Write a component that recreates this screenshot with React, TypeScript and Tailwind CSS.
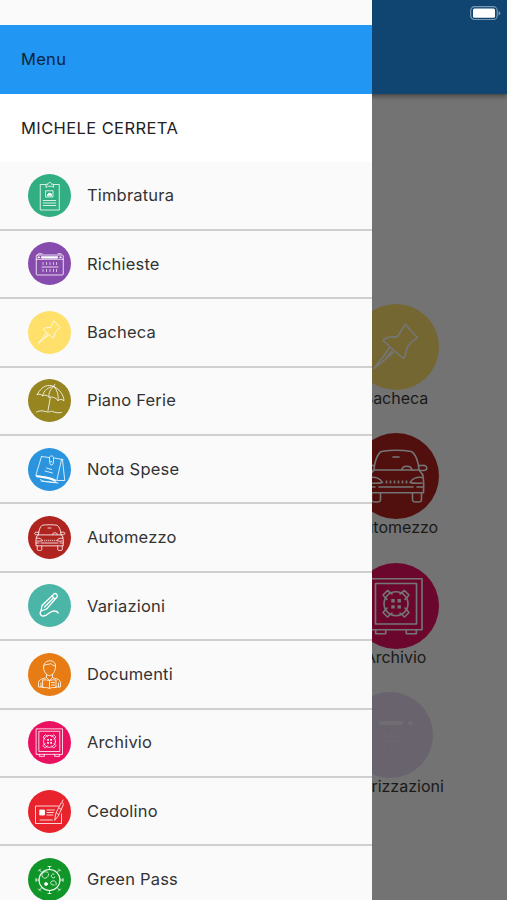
import React from 'react';
import { clsx } from 'clsx';

type IconName =
  | 'timbratura'
  | 'richieste'
  | 'bacheca'
  | 'ferie'
  | 'spese'
  | 'automezzo'
  | 'variazioni'
  | 'documenti'
  | 'archivio'
  | 'cedolino'
  | 'greenpass'
  | 'autorizzazioni';

interface MenuEntry {
  label: string;
  icon: IconName;
  color: string;
}

const entries: MenuEntry[] = [
  { label: 'Timbratura', icon: 'timbratura', color: 'bg-[#31ae82]' },
  { label: 'Richieste', icon: 'richieste', color: 'bg-[#874bad]' },
  { label: 'Bacheca', icon: 'bacheca', color: 'bg-[#fee06b]' },
  { label: 'Piano Ferie', icon: 'ferie', color: 'bg-[#97851f]' },
  { label: 'Nota Spese', icon: 'spese', color: 'bg-[#2b94de]' },
  { label: 'Automezzo', icon: 'automezzo', color: 'bg-[#b02420]' },
  { label: 'Variazioni', icon: 'variazioni', color: 'bg-[#4bb5a7]' },
  { label: 'Documenti', icon: 'documenti', color: 'bg-[#e77c15]' },
  { label: 'Archivio', icon: 'archivio', color: 'bg-[#ea1160]' },
  { label: 'Cedolino', icon: 'cedolino', color: 'bg-[#e9232b]' },
  { label: 'Green Pass', icon: 'greenpass', color: 'bg-[#109528]' },
];

// All drawings share an 86x86 box, the size of the circle on the home page
const drawings: Record<IconName, React.ReactNode> = {
  timbratura: (
    <>
      <path d="M35 21H24.5v51h38V21H52" />
      <path d="M36 26.5v-6h4c0-5 7-5 7 0h4v6l-4-2h-7z" />
      <rect x="36" y="33.5" width="14" height="12.5" />
      <path d="M39 43v-2l3-3 5 2v3z" fill="currentColor" />
      <path d="M30.5 53h25M30.5 58h25M30.5 63h25" />
    </>
  ),
  richieste: (
    <>
      <rect x="16.5" y="26" width="54" height="40" rx="2" />
      <path d="M16.5 34.5h54M21 23.5h7M60 23.5h6" />
      <path d="M28 30.5h30" strokeWidth="4.5" />
      <path d="M20.5 30.5h2M64 30.5h2" strokeWidth="3" />
      <path d="M28 50h32" />
      <path
        d="M30 41v4M37 41v4M44 41v4M51 41v4M57 41v4M30 55v4M37 55v4M44 55v4M51 55v4M57 55v4"
        opacity="0.85"
      />
    </>
  ),
  autorizzazioni: (
    <>
      <path d="M34 31h20" strokeWidth="4" />
      <path d="M63 31h.5" strokeWidth="4" />
      <path d="M37 49h20M38 41v3M44 41v3M50 41v3M56 41v3M38 55v3M44 55v3M50 55v3M56 55v3" opacity="0.35" />
    </>
  ),
  bacheca: (
    <>
      <path d="M52.3 20.3c1.3 2 2.5 2.8 5 5.4 3 3.2 4.5 5.6 7.2 7.5-1.2 2-3.6 2.2-6 5.1-3 3.4-4.5 4.2-4.8 6.4-.5 3.3-.8 7.3-3.4 9.8L30 36.5c2.4-3 8.5-4 14.3-3.5z" />
      <path d="M36.5 43.5 30 53l-9.3 11.5L31 56.5l9.5-8M33 54l6-7" />
    </>
  ),
  ferie: (
    <>
      <path d="M18.5 31C27 13 42 10 51.5 15c12 6 20 17 20.5 28.5-4-3-8-3.5-12-.5-5-6-11-8-18-6.5-3-4-9-5.5-13-3-3-3-6-3.7-10.500-2.5z" />
      <path d="M51.5 15C39 16 32 23 29 33.5M51.5 15C44 21 41 28 42 36.5M51.5 15c7 7 10 17 8.500 28M51.5 15l2-4" />
      <path d="m44.5 38-4.5 25M17 66c7-3 11-3 18-1 9 3 10-2 15 0 5 3 10 3 17 2" />
    </>
  ),
  spese: (
    <>
      <path d="m27 17 15 2m10 1 18 3M27 17 15.5 55c12 3 25 1 42 10L67 23" />
      <path d="M59 65h14.5L69 24M25 63c3 5 17 5 32 6M26 66l34 4" />
      <path d="M43 27v-8c1-5 8-4 8 1 0 4 1 12-3 14-4 1-5-3-4-6 1-2 3-2 4 0" />
      <path d="m37 40 10 3M34 46l15 4" />
      <path d="M18 56.5c14 2 24 2 36 9" strokeWidth="4" />
    </>
  ),
  automezzo: (
    <>
      <path d="M21 37c0-6 3-16 7.3-18.5 8-1.300 22-1.300 30 0C63 21 66 31 66 37zM21 37l-4 5M66 37l4 5" />
      <path d="M21.5 32.5h-4c-5-1-6 5-1 5h4M65.5 32.5h4c5-1 6 5 1 5h-4" />
      <path d="M40 24h6M49 37c0-5 9-5 10 0" />
      <path d="M17 42c-2 6-1 12-1 17.700h54.500c0-6 1-12-1-17.700" />
      <path d="M17.5 44.5c5-1 10 1 12 5-4 1-8 1-12 .5M69 44.5c-5-1-10 1-12 5 4 1 8 1 12 .5" />
      <path
        d="M33.5 47.500v3M37.5 47.500v3M41.5 47.500v3M45.5 47.500v3M49.5 47.500v3M53.5 47.500v3"
        strokeLinecap="butt"
      />
      <path d="M26 54h34M16 54h6M64 54h6" />
      <path d="M18.5 60v6c0 3 1 3 4.500 3s4.500 0 4.500-3v-6M59.500 60v6c0 3 1 3 4.500 3s4.500 0 4.500-3v-6" />
    </>
  ),
  variazioni: (
    <>
      <path d="m28 43 24-23c3-3 9 2 6 6L37 50l-11 4z" strokeWidth="2.6" />
      <path d="m48 24 6 6M33 46l18-18" strokeWidth="2.4" />
      <path d="M26 54c-4 5 0 11 5 10 9-1 12-10 21-10 5 0 7 1 8.500 4" strokeWidth="2.6" />
    </>
  ),
  documenti: (
    <>
      <path d="M31 29c-2-17 26-19 24-1-1 9-5 17-12 17S32 38 31 29z" />
      <path d="M32 25c5-4 11-1 14-4 2 4 6 4 9 5" />
      <path d="M37 43v6c-5 3-15 2-16 10v9h9M49 43v6c5 3 15 2 16 10v9h-9M37 49l6 6 6-6" />
      <path d="M30 54c6-1 10 0 13 2 3-2 7-3 13-2v15c-6 0-10 0-13 2-3-2-7-2-13-2zM43 56v15M47 59h6M47 64h6M26 60v8M61 60v8" />
    </>
  ),
  archivio: (
    <>
      <rect x="17" y="15.7" width="52" height="51" />
      <rect x="22.5" y="20.5" width="41" height="40.5" />
      <circle cx="43" cy="40.7" r="12" />
      <path d="M34 36.5 30 32l4.500-4.500L39 31M47 31l4.500-3.500L56 32l-4 4.500M52 45l4 4.500-4.500 4.500-4.500-4M39 50l-4.500 4-4.500-4.500 4-4.500" />
      <path
        d="M38.300 36h3.400v3.400h-3.400zM44.500 36h3.400v3.400h-3.400zM38.300 42.200h3.400v3.400h-3.400zM44.500 42.200h3.400v3.400h-3.400z"
        fill="currentColor"
        stroke="none"
      />
      <path d="M22.700 66.700v4h10v-4M53.300 66.700v4h10v-4" />
    </>
  ),
  cedolino: (
    <>
      <path d="M61 32H15v35h52V48" />
      <rect x="24" y="40" width="9" height="10" fill="currentColor" />
      <path d="M38 40h15M38 45h13M38 50h12M24 60h25" />
      <path d="m53.500 60 2-13 10-20c2-3 7-1 5 3L61 51zM62 36l5 3M68 24l2-4M57 46l4 3" />
    </>
  ),
  greenpass: (
    <>
      <circle cx="43" cy="44" r="21" strokeWidth="2.2" />
      <path d="M43 23v-6M40 17h6M43 65v6M40 71h6M22 44h-6M16 41v6M64 44h6M70 41v6M28 29l-5-5M21 26l4-4M58 29l5-5M61 22l4 4M28 59l-5 5M21 62l4 4M58 59l5 5M61 66l4-4" />
      <path d="M41 32c1 9-12 12-13 3 0-6 7-10 12-6M52 54c-7 2-9-7-3-8 5-2 9 3 7 8M52 32a4 4 0 1 0 2 6" />
      <circle cx="36" cy="52" r="3" fill="currentColor" />
    </>
  ),
};

interface RoundIconProps {
  name: IconName;
  color: string;
  large?: boolean;
  faded?: boolean;
}

const RoundIcon: React.FC<RoundIconProps> = ({ name, color, large, faded }) => (
  <div className={clsx('shrink-0 rounded-full text-white', color, large ? 'size-[86px]' : 'size-[43px]')}>
    <svg
      viewBox="0 0 86 86"
      className={clsx('block size-full', faded && 'opacity-60')}
      fill="none"
      stroke="currentColor"
      strokeWidth="1.6"
      strokeLinejoin="round"
      strokeLinecap="round"
    >
      {drawings[name]}
    </svg>
  </div>
);

const HomeTile: React.FC<RoundIconProps & { label: string }> = ({ label, ...icon }) => (
  <div className="flex h-[129.5px] flex-col items-center">
    <RoundIcon {...icon} large />
    <span className="whitespace-nowrap text-[16px] leading-[17px] text-[#3c3c3c]">{label}</span>
  </div>
);

const HomePage: React.FC = () => (
  <div className="flex h-full flex-col bg-[#fafafa]">
    <header className="h-[94px] shrink-0 bg-[#2196f3] shadow-[0_2px_5px_rgba(0,0,0,0.45)]" />
    <main className="flex flex-col items-start pl-[338px] pt-[209.6px]">
      <div className="w-[115px]">
        <HomeTile name="bacheca" label="Bacheca" color="bg-[#fee06b]" />
        <HomeTile name="automezzo" label="Automezzo" color="bg-[#b02420]" />
        <HomeTile name="archivio" label="Archivio" color="bg-[#ea1160]" />
      </div>
      <div className="w-[104px]">
        <HomeTile name="autorizzazioni" label="Autorizzazioni" color="bg-[#e4d8f0]" faded />
      </div>
    </main>
  </div>
);

const Drawer: React.FC = () => (
  <aside className="absolute inset-y-0 left-0 flex w-[372.4px] flex-col overflow-hidden bg-[#fafafa]">
    <div className="h-[25.4px] shrink-0" />
    <div className="flex h-[68.4px] shrink-0 items-center bg-[#2196f3] pl-[21px] text-[16.5px] tracking-[0.3px] text-[#0c2539]">
      Menu
    </div>
    <div className="flex h-[68.6px] shrink-0 items-center bg-white pl-[21px] pt-px text-[16.5px] tracking-[0.4px] text-[#222]">
      MICHELE CERRETA
    </div>
    <nav>
      {entries.map((entry) => (
        <a key={entry.label} className="flex h-[68.4px] items-center gap-[15.5px] border-b-2 border-[#cfcfcf] pl-[28.4px]">
          <RoundIcon name={entry.icon} color={entry.color} />
          <span className="text-[16.5px] tracking-[0.2px] text-[#333]">{entry.label}</span>
        </a>
      ))}
    </nav>
  </aside>
);

const Battery: React.FC = () => (
  <svg className="absolute right-[6px] top-[6px] h-[14px] w-[31px]" viewBox="0 0 31 14" fill="none">
    <rect x="0.7" y="0.7" width="26.5" height="12.8" rx="3.8" stroke="#7898b0" strokeWidth="1.2" />
    <rect x="3" y="2.5" width="22" height="9.2" rx="1.5" fill="white" />
    <path d="M28.5 5v4.500c2.500-1 2.500-3.500 0-4.500z" fill="#7898b0" />
  </svg>
);

export default function App() {
  return (
    <div className="relative h-[900px] w-[507px] overflow-hidden font-['Inter','Liberation_Sans',sans-serif]">
      <HomePage />
      <div className="absolute inset-0 bg-black/54" />
      <Drawer />
      <Battery />
    </div>
  );
}
